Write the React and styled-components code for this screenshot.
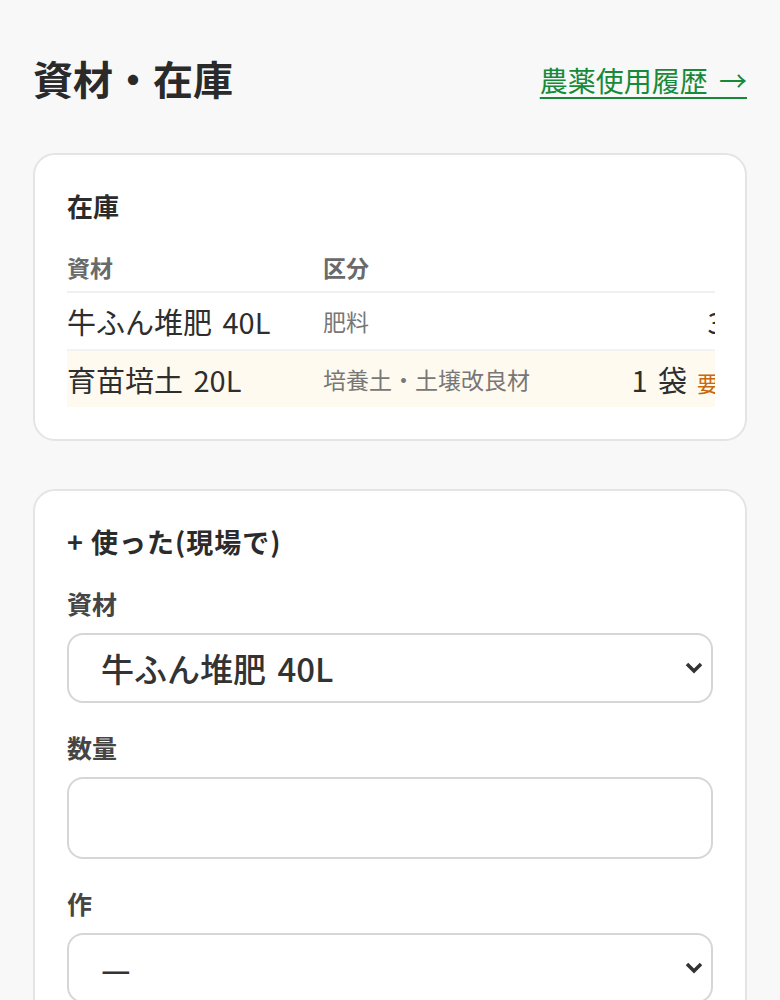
import React from "react";
import styled, { createGlobalStyle } from "styled-components";

const GlobalStyle = createGlobalStyle`
  body {
    margin: 0;
    background: #f8f8f8;
    font-family: "Noto Sans CJK JP", "Noto Sans", sans-serif;
    color: #2b2b2b;
  }
`;

const Page = styled.div`
  padding: 52px 33px 40px;
`;

const Header = styled.header`
  display: flex;
  align-items: center;
  justify-content: space-between;
  height: 52px;
  margin-bottom: 49px;
`;

const Title = styled.h1`
  margin: 0;
  font-size: 40px;
  font-weight: 700;
  line-height: 1.2;
  color: #2a2a2a;
`;

const HistoryLink = styled.a`
  font-size: 28px;
  line-height: 1.2;
  color: #178a3a;
  text-decoration: underline;
  text-underline-offset: 5px;
  text-decoration-thickness: 2px;
  margin-top: 6px;
  word-spacing: 5px;
`;

const Card = styled.section`
  background: #fff;
  border: 2px solid #e4e4e4;
  border-radius: 22px;
  padding: 32px;
  margin-bottom: 48px;
`;

const CardTitle = styled.h2`
  margin: 0 0 ${(p) => p.$gap ?? 18}px;
  font-size: ${(p) => p.$size || 26}px;
  font-weight: 700;
  line-height: 38px;
  letter-spacing: ${(p) => p.$spacing || 0}px;
  color: #2b2b2b;
`;

const TableWrap = styled.div`
  overflow: hidden;
  margin-right: -2px;
`;

const Table = styled.table`
  border-collapse: collapse;
  table-layout: fixed;
  width: 696px;
  white-space: nowrap;
`;

const Th = styled.th`
  height: 48px;
  padding: 0;
  text-align: left;
  font-size: 23px;
  font-weight: 700;
  color: #6a6a6a;
  border-bottom: 2px solid #f0f0f0;
`;

const Row = styled.tr`
  background: ${(p) => (p.$warn ? "#fffaf0" : "transparent")};
  border-bottom: ${(p) => (p.$last ? "none" : "2px solid #f2f2f2")};
`;

const Td = styled.td`
  height: 56px;
  padding: 0;
  font-size: ${(p) => (p.$sub ? 23 : 29)}px;
  color: ${(p) => (p.$sub ? "#777" : "#2e2e2e")};
  text-align: ${(p) => (p.$right ? "right" : "left")};
  font-weight: 400;
  word-spacing: ${(p) => (p.$sub ? 0 : 4)}px;
`;

const Warn = styled.span`
  margin-left: 10px;
  font-size: 22px;
  color: #c8680e;
  word-spacing: 0;
`;

const Field = styled.div`
  margin-top: ${(p) => p.$top || 26}px;
`;

const Label = styled.label`
  display: block;
  font-size: 25px;
  font-weight: 700;
  line-height: 36px;
  color: #454545;
  margin-bottom: 12px;
`;

const SelectBox = styled.div`
  position: relative;
`;

const Select = styled.select`
  appearance: none;
  width: 100%;
  height: 70px;
  box-sizing: border-box;
  border: 2px solid #d6d6d6;
  border-radius: 16px;
  background: #fff;
  padding: 0 40px 0 32px;
  font-family: inherit;
  font-size: 33px;
  font-weight: 500;
  word-spacing: 4px;
  color: #333;
  outline: none;
`;

const Chevron = styled.svg`
  position: absolute;
  right: 9px;
  top: 50%;
  transform: translateY(-50%);
  pointer-events: none;
`;

const Input = styled.input`
  display: block;
  width: 100%;
  height: 82px;
  box-sizing: border-box;
  border: 2px solid #d6d6d6;
  border-radius: 16px;
  background: #fff;
  padding: 0 32px;
  font-family: inherit;
  font-size: 32px;
  outline: none;
`;

const Dropdown = ({ value, options }) => (
  <SelectBox>
    <Select defaultValue={value}>
      {options.map((o) => (
        <option key={o}>{o}</option>
      ))}
    </Select>
    <Chevron width="20" height="14" viewBox="0 0 20 14">
      <polyline
        points="3,3 10,10 17,3"
        fill="none"
        stroke="#333"
        strokeWidth="3.5"
      />
    </Chevron>
  </SelectBox>
);

const stock = [
  { name: "牛ふん堆肥 40L", kind: "肥料", qty: "3 袋" },
  { name: "育苗培土 20L", kind: "培養土・土壌改良材", qty: "1 袋", warn: true },
];

export default function App() {
  return (
    <Page>
      <GlobalStyle />
      <Header>
        <Title>資材・在庫</Title>
        <HistoryLink href="#">農薬使用履歴 →</HistoryLink>
      </Header>

      <Card>
        <CardTitle>在庫</CardTitle>
        <TableWrap>
          <Table>
            <colgroup>
              <col style={{ width: 256 }} />
              <col style={{ width: 300 }} />
              <col style={{ width: 140 }} />
            </colgroup>
            <thead>
              <tr>
                <Th>資材</Th>
                <Th>区分</Th>
                <Th />
              </tr>
            </thead>
            <tbody>
              {stock.map((s, i) => (
                <Row key={s.name} $warn={s.warn} $last={i === stock.length - 1}>
                  <Td>{s.name}</Td>
                  <Td $sub>{s.kind}</Td>
                  <Td $right>
                    {s.qty}
                    {s.warn && <Warn>要補充</Warn>}
                  </Td>
                </Row>
              ))}
            </tbody>
          </Table>
        </TableWrap>
      </Card>

      <Card>
        <CardTitle $size={27} $gap={0} $spacing={1}>+ 使った(現場で)</CardTitle>
        <Field $top={24}>
          <Label>資材</Label>
          <Dropdown value="牛ふん堆肥 40L" options={["牛ふん堆肥 40L", "育苗培土 20L"]} />
        </Field>
        <Field>
          <Label>数量</Label>
          <Input type="text" />
        </Field>
        <Field>
          <Label>作</Label>
          <Dropdown value="—" options={["—"]} />
        </Field>
      </Card>
    </Page>
  );
}
